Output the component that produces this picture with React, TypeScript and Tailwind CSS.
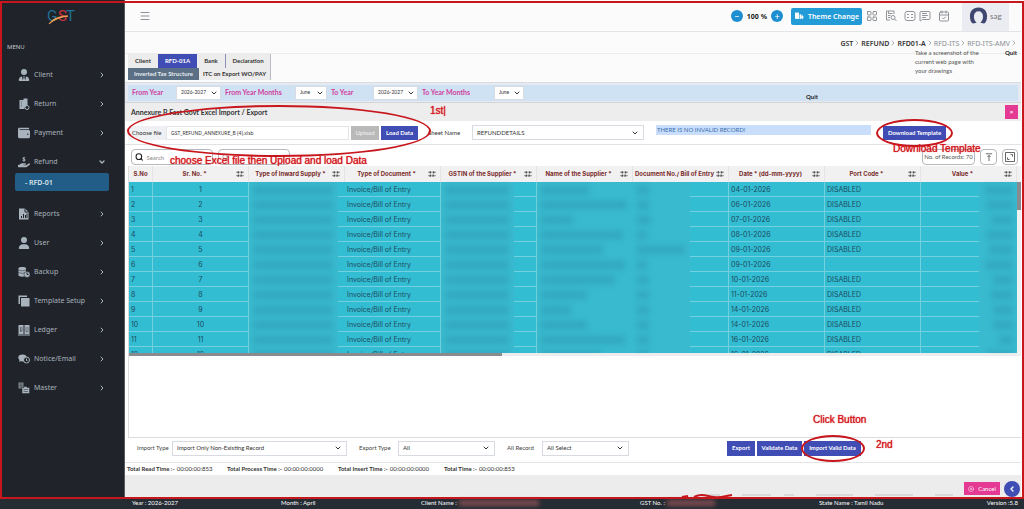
import type { ReactNode } from "react";
import clsx from "clsx";
import { CalendarCheck, ChevronDown, ChevronLeft, ChevronRight, CircleX, LayoutGrid, Menu, MessageSquareText, Search } from "lucide-react";
import { FaHandHoldingDollar, FaUser, FaUserTie, FaWallet } from "react-icons/fa6";

function ReturnIcon() {
  return (
    <svg viewBox="0 0 24 24" className="h-3 w-3" fill="currentColor">
      <path d="M3 4h8V1h8v14a6 6 0 0 0-6 7H3z" />
      <circle cx="18" cy="19" r="4" fill="none" stroke="currentColor" strokeWidth="2" />
      <path d="M6 8h2M6 12h2M6 16h2" stroke="#20242a" strokeWidth="1" />
    </svg>
  );
}

function ReportIcon() {
  return (
    <svg viewBox="0 0 24 24" className="h-3 w-3" fill="currentColor">
      <path d="M2 1h12l7 7v15H2z" />
      <path d="M14 1v7h7" stroke="#20242a" strokeWidth="2" fill="none" />
      <path d="M7 20v-4M11 20v-8M15 20v-6M18 20v-9" stroke="#20242a" strokeWidth="2" />
    </svg>
  );
}

function BackupIcon() {
  return (
    <svg viewBox="0 0 24 24" className="h-3 w-3" fill="currentColor">
      <path d="M1 4c0-3 15-3 15 0v15c0 3-15 3-15 0z" />
      <path d="M1 8c4 2 11 2 15 0M1 13c4 2 11 2 15 0" stroke="#20242a" fill="none" />
      <circle cx="18" cy="17" r="6" stroke="#20242a" />
      <path d="M18 13v4h3" stroke="#20242a" strokeWidth="2" fill="none" />
    </svg>
  );
}

function TemplateIcon() {
  return (
    <svg viewBox="0 0 24 24" className="h-3 w-3" fill="currentColor">
      <path d="M1 1h17v3H4v14H1z" />
      <path d="M6 6h17v17H6z" />
      <path d="M5 19V5h14" stroke="#20242a" fill="none" />
    </svg>
  );
}

function LedgerIcon() {
  return (
    <svg viewBox="0 0 24 24" className="h-3 w-3" fill="currentColor">
      <path d="M1 2h10v18H1zM13 2h10v18H13z" />
      <path d="M0 22h24" stroke="currentColor" strokeWidth="2" />
      <path d="M5 6v10M8 6v8h-3M16 6v8c0 3 4 3 4 0V6" stroke="#20242a" strokeWidth="1" fill="none" />
    </svg>
  );
}

function NoticeIcon() {
  return (
    <svg viewBox="0 0 24 24" className="h-3 w-3" fill="currentColor">
      <path d="M9 3c12 0 11 14 1 14-2 0-3 0-4-1l-4 2 1-4C-2 9 1 3 9 3z" />
      <circle cx="17" cy="14" r="6" fill="#20242a" stroke="currentColor" strokeWidth="2" />
      <path d="M17 11v4h2" stroke="currentColor" strokeWidth="2" fill="none" />
    </svg>
  );
}

function MasterIcon() {
  return (
    <svg viewBox="0 0 24 24" className="h-3 w-3" fill="currentColor">
      <path d="M1 1h10v12H1z" opacity=".7" />
      <path d="M3 4h6M3 7h6M3 10h6" stroke="#20242a" />
      <path d="M8 11h4V9h6v2h5v12H8z" stroke="#20242a" />
      <path d="M11 15h9M11 19h9" stroke="#20242a" strokeWidth="1" />
    </svg>
  );
}

const MENU_TOP = [
  { label: "Client", icon: <FaUserTie className="h-3 w-3" /> },
  { label: "Return", icon: <ReturnIcon /> },
  { label: "Payment", icon: <FaWallet className="h-3 w-3" /> },
];

const MENU_BOTTOM = [
  { label: "Reports", icon: <ReportIcon /> },
  { label: "User", icon: <FaUser className="h-3 w-3" /> },
  { label: "Backup", icon: <BackupIcon /> },
  { label: "Template Setup", icon: <TemplateIcon /> },
  { label: "Ledger", icon: <LedgerIcon /> },
  { label: "Notice/Email", icon: <NoticeIcon /> },
  { label: "Master", icon: <MasterIcon /> },
];

// name / doc / val are widths of the masked values in px
const ROWS = [
  { date: "04-01-2026", port: "DISABLED", name: 48, doc: 12, val: 28 },
  { date: "06-01-2026", port: "DISABLED", name: 86, doc: 12, val: 26 },
  { date: "07-01-2026", port: "DISABLED", name: 32, doc: 14, val: 22 },
  { date: "08-01-2026", port: "DISABLED", name: 82, doc: 10, val: 26 },
  { date: "09-01-2026", port: "DISABLED", name: 62, doc: 48, val: 24 },
  { date: "09-01-2026", port: "", name: 84, doc: 10, val: 28 },
  { date: "10-01-2026", port: "DISABLED", name: 74, doc: 12, val: 20 },
  { date: "11-01-2026", port: "DISABLED", name: 46, doc: 12, val: 22 },
  { date: "14-01-2026", port: "DISABLED", name: 30, doc: 12, val: 20 },
  { date: "14-01-2026", port: "DISABLED", name: 46, doc: 12, val: 20 },
  { date: "16-01-2026", port: "DISABLED", name: 84, doc: 12, val: 14 },
  { date: "16-01-2026", port: "DISABLED", name: 60, doc: 12, val: 26 },
];

const COLUMNS = [
  "Sr. No. *",
  "Type of Inward Supply *",
  "Type of Document *",
  "GSTIN of the Supplier *",
  "Name of the Supplier *",
  "Document No./ Bill of Entry",
  "Date * (dd-mm-yyyy)",
  "Port Code *",
  "Value *",
];

function MenuItem({ label, icon, open }: { label: string; icon: ReactNode; open?: boolean }) {
  return (
    <a href="#" className="flex h-[29px] items-center gap-1 pl-[18px] pr-[18px] text-[7px] text-[#a9b3bd]">
      {icon}
      <span className="flex-1">{label}</span>
      {open ? <ChevronDown className="h-2 w-2" strokeWidth={4} /> : <ChevronRight className="h-2 w-2" strokeWidth={3} />}
    </a>
  );
}

function Sidebar() {
  return (
    <aside className="w-[125px] shrink-0 border-r border-[#555a60] bg-[#20242a] pt-2 font-['Noto_Sans',sans-serif]">
      <svg viewBox="0 0 30 18" className="ml-[47px] h-[18px] w-[30px]">
        <text x="0" y="13" fontSize="15" fontFamily="Roboto, sans-serif" fill="#1f6f96">G</text>
        <text x="11" y="13" fontSize="15" fontFamily="Roboto, sans-serif" fill="#c8323c">S</text>
        <text x="19" y="13" fontSize="15" fontFamily="Roboto, sans-serif" fill="#1f6f96">T</text>
        <path d="M2 16C6 10 14 8 21 8C14 9 8 11 2 16z" fill="#f0a050" stroke="#f0a050" />
      </svg>
      <div className="mt-4 pl-[7px] text-[6px] leading-[10px] text-[#c3c9cf]">MENU</div>
      <nav className="mt-2">
        {MENU_TOP.map((item) => (
          <MenuItem key={item.label} {...item} />
        ))}
        <MenuItem label="Refund" icon={<FaHandHoldingDollar className="h-3 w-3" />} open />
        <a href="#" className="mx-[15px] mt-[-3px] mb-2 flex h-[18px] items-center rounded-xs bg-[#215d87] pl-2.5 text-[7px] font-semibold text-[#dbe6ee]">
          - RFD-01
        </a>
        {MENU_BOTTOM.map((item) => (
          <MenuItem key={item.label} {...item} />
        ))}
      </nav>
    </aside>
  );
}

function TopBar() {
  return (
    <header className="flex h-8 items-center border-b border-[#e4e4e8] pt-px pl-[14px] pr-3 text-[#8f9399]">
      <button aria-label="Menu">
        <Menu className="h-3 w-3" strokeWidth={2} />
      </button>
      <div className="ml-auto flex items-center gap-1">
        <button className="flex h-3 w-3 items-center justify-center rounded-full bg-[#1d8fd0] text-[9px] leading-none text-white">−</button>
        <span className="font-['Noto_Sans',sans-serif] text-[7px] font-bold text-[#222]">100 %</span>
        <button className="flex h-3 w-3 items-center justify-center rounded-full bg-[#1d8fd0] text-[9px] leading-none text-white">+</button>
      </div>
      <button className="ml-2 flex h-[17px] w-[71px] items-center justify-center gap-1 rounded-xs bg-[#239bd7] font-['Noto_Sans',sans-serif] text-[7px] font-semibold text-white">
        <svg viewBox="0 0 16 14" className="h-2 w-2.5" fill="currentColor">
          <path d="M1 1h7v11H1z" />
          <path d="M9 4h3v8H9z" />
          <path d="M10 9h5M13 6l2 3-2 3" stroke="currentColor" strokeWidth="2" fill="none" />
        </svg>
        Theme Change
      </button>
      <div className="ml-1 flex items-center gap-[7px]">
        <LayoutGrid className="h-3 w-3" strokeWidth={2} />
        <svg viewBox="0 0 24 24" className="h-3 w-3" fill="none" stroke="currentColor" strokeWidth="2">
          <path d="M18 8V2H3v18h7M7 2v5h8M6 11h5M6 15h4" />
          <circle cx="16" cy="15" r="4" />
          <path d="M19 18l4 4" />
        </svg>
        <div className="flex items-center gap-[3px]">
          <svg viewBox="0 0 24 24" className="h-3 w-3" fill="none" stroke="currentColor" strokeWidth="2">
            <rect x="2" y="3" width="20" height="18" rx="4" />
            <path d="M6 9h4M14 9h4M6 15h4M14 15h4" />
          </svg>
          <MessageSquareText className="h-3 w-3" strokeWidth={2} />
        </div>
        <CalendarCheck className="h-3 w-3" strokeWidth={2} />
      </div>
      <div className="ml-3 flex h-full w-[47px] items-center gap-0.5 bg-[#ebebf2] pl-[7px] text-[8px] text-[#777]">
        <svg viewBox="0 0 20 20" className="h-5 w-[19px]">
          <path d="M10 1c6 0 9 4 9 9 0 4-1 7-3 8l-4-1c4-3 4-12-2-12S4 14 8 17l-4 1c-2-1-3-4-3-8 0-5 3-9 9-9z" fill="#3f4770" />
        </svg>
        sag
      </div>
    </header>
  );
}

function Breadcrumb() {
  const items = ["GST", "REFUND", "RFD01-A", "RFD-ITS", "RFD-ITS-AMV"];
  return (
    <nav className="flex h-[22px] items-center justify-end border-b border-[#ececec] pt-px pr-[3px] font-['Noto_Sans',sans-serif] text-[7px]">
      {items.map((item, i) => (
        <a key={item} href="#" className={clsx("flex items-center", i < 3 ? "font-semibold text-[#333]" : "text-[#8a8f96]")}>
          {item}
          <ChevronRight className="h-2 w-2 text-[#888]" />
        </a>
      ))}
    </nav>
  );
}

function Tabs() {
  return (
    <div className="flex border-b border-[#d9dde2] pl-[3px] text-[6px] font-bold text-[#333]">
      <div className="mb-0.5">
        <div className="flex h-[14px]">
          <button className="w-[30px] bg-[#ececec]">Client</button>
          <button className="w-[39px] bg-[#3f4db4] text-white">RFD-01A</button>
          <button className="w-[29px] border-r border-[#8a90b8] bg-[#ececec]">Bank</button>
          <button className="w-[45px] border-r border-[#b9bcc8] bg-[#ececec]">Declaration</button>
        </div>
        <div className="flex h-[12px]">
          <button className="w-[71px] bg-[#5b6f85] text-[#e6ebf0]">Inverted Tax Structure</button>
          <button className="w-[72px] border-r border-[#b9bcc8] bg-[#ececec]">ITC on Export WO/PAY</button>
        </div>
      </div>
      <p className="relative ml-auto mr-9 mt-[-6px] w-[70px] text-[6px] font-normal leading-[9px] text-[#555]">
        Take a screenshot of the current web page with your drawings
        <span className="absolute left-[90px] top-0 font-bold text-[#222]">Quit</span>
      </p>
    </div>
  );
}

function Select({ label, value, className, compact }: { label: string; value: string; className?: string; compact?: boolean }) {
  return (
    <span className={clsx("relative block border border-[#d8dce2] bg-white font-normal text-[#333]", compact ? "text-[5px]" : "text-[6px]", className)}>
      <select aria-label={label} className="h-full w-full appearance-none pl-1">
        <option>{value}</option>
      </select>
      <ChevronDown className={clsx("pointer-events-none absolute top-1/2 h-2 w-2 -translate-y-1/2", compact ? "right-0.5" : "right-1")} strokeWidth={3} />
    </span>
  );
}

function PeriodBar() {
  return (
    <div className="flex h-5 items-center border-b border-[#d5d5d8] bg-[#e6eaf0] px-[3px]">
      <div className="flex h-4 flex-1 items-center bg-[#cfe2f3] text-[7px] font-bold text-[#cf3f9f]">
        <span className="w-12 pl-1">From Year</span>
        <Select compact label="From Year" value="2026-2027" className="h-[14px] w-[45px]" />
        <span className="w-[74px] pl-1">From Year Months</span>
        <Select compact label="From Year Months" value="June" className="h-[14px] w-8" />
        <span className="w-[46px] pl-1">To Year</span>
        <Select compact label="To Year" value="2026-2027" className="h-[14px] w-[45px]" />
        <span className="w-[76px] pl-1">To Year Months</span>
        <Select compact label="To Year Months" value="June" className="h-[14px] w-[30px]" />
        <button className="ml-auto mr-[200px] pt-2 text-[6px] font-bold text-[#222]">Quit</button>
      </div>
    </div>
  );
}

function FileRow() {
  return (
    <div className="relative flex h-6 items-center border-b border-[#e2e2e5] bg-white pl-[3px] text-[6px] text-[#333]">
      <label htmlFor="file" className="flex h-[14px] w-[38px] items-center bg-[#eef0f4] pl-1">Choose file</label>
      <input id="file" defaultValue="GST_REFUND_ANNEXURE_B (4).xlsb" className="h-[14px] w-[183px] border border-[#e2e5ea] bg-white pl-1 text-[5px] font-['Noto_Sans',sans-serif]" />
      <button className="ml-0.5 h-[14px] w-7 bg-[#b9b9b9] font-bold text-[#e8e8e8]">Upload</button>
      <button className="ml-0.5 h-[14px] w-[37px] bg-[#3f4db4] font-bold text-white">Load Data</button>
      <span className="ml-2.5 w-[44px]">Sheet Name</span>
      <Select label="Sheet Name" value="REFUNDDETAILS" className="h-[15px] w-[172px]" />
      <mark className="mb-1.5 ml-3 h-[10px] w-[215px] bg-[#c9defa] pl-px leading-[9px] text-[#3a6fb0]">THERE IS NO INVALID RECORD!</mark>
      <div className="relative ml-3">
        <button className="h-[14px] w-[63px] bg-[#3f4db4] font-bold text-white">Download Template</button>
        <span className="pointer-events-none absolute -inset-x-[7px] -inset-y-[7px] rounded-[50%] border-2 border-[#c8161d]" />
        <Note className="left-2.5 top-[17px]">Download Template</Note>
      </div>
      <span className="pointer-events-none absolute left-[2px] top-[-16px] z-10 h-[52px] w-[304px] rounded-[50%] border-2 border-[#c8161d]" />
      <Note className="left-[305px] top-[-16px]">1st|</Note>
      <Note className="left-[45px] top-[34px]">choose Excel file then Upload and load Data</Note>
    </div>
  );
}

function Note({ className, children }: { className: string; children: ReactNode }) {
  return (
    <span className={clsx("pointer-events-none absolute z-10 whitespace-nowrap font-['Liberation_Sans',sans-serif] text-[10px] leading-3 text-[#d3141b] text-shadow-[0_0_1px_#d3141b]", className)}>
      {children}
    </span>
  );
}

function Masked({ cover, width, align }: { cover: string; width: number; align?: "right" }) {
  return (
    <div className={clsx("flex h-[15px]", align && "flex-row-reverse")}>
      <span className={clsx("flex items-center bg-[#39bacf] px-1", cover, align && "justify-end")}>
        <span className="block h-2 bg-[#2a93ab] opacity-50 blur-[3px]" style={{ width }} />
      </span>
      <span className="flex-1 border-b border-[#74d0de]" />
    </div>
  );
}

function FilterIcon() {
  return (
    <svg viewBox="0 0 14 12" className="h-2 w-2 shrink-0" fill="none" stroke="#444" strokeWidth="1">
      <path d="M0 3h14M0 9h14" />
      <path d="M4 1v4M9 7v4M10 1v4M4 7v4" strokeWidth="2" />
    </svg>
  );
}

function DataGrid() {
  return (
    <div className="h-[187px] overflow-hidden font-[Inter,sans-serif]">
      <table className="w-full table-fixed border-separate border-spacing-0 text-[7px] leading-none text-[#1d4a5c]">
        <thead className="bg-[#f1f1f2] text-[6px] text-[#7a2c2c]">
          <tr className="h-4">
            <th className="w-6 border-r border-[#e4e4e4] p-0">S.No</th>
            {COLUMNS.map((col) => (
              <th key={col} className="border-r border-[#e4e4e4] p-0">
                <div className="flex items-center pr-1">
                  <span className="flex-1 whitespace-nowrap text-center">{col}</span>
                  <FilterIcon />
                </div>
              </th>
            ))}
          </tr>
        </thead>
        <tbody className="bg-[#33bdd3]">
          {ROWS.map((row, i) => (
            <tr key={i} className="h-[15px]">
              <td className="border-r border-b border-[#74d0de] p-0 pl-0.5">{i + 1}</td>
              <td className="border-r border-b border-[#74d0de] p-0 text-center">{i + 1}</td>
              <td className="p-0"><Masked cover="w-[93%]" width={80} /></td>
              <td className="border-r border-b border-[#74d0de] p-0 pl-0.5">Invoice/Bill of Entry</td>
              <td className="border-r border-[#74d0de] p-0"><Masked cover="w-[77%]" width={64} /></td>
              <td className="p-0"><Masked cover="w-full" width={row.name} /></td>
              <td className="border-r border-[#74d0de] p-0"><Masked cover="w-[60%]" width={row.doc} /></td>
              <td className="border-r border-b border-[#74d0de] p-0 pl-0.5">{row.date}</td>
              <td className="border-r border-b border-[#74d0de] p-0 pl-0.5">{row.port}</td>
              <td className="p-0"><Masked cover="w-[40%]" width={row.val} align="right" /></td>
            </tr>
          ))}
        </tbody>
      </table>
    </div>
  );
}

function GridToolbar() {
  return (
    <div className="mt-[3px] flex h-[18px] items-center gap-[5px] pl-1.5 pr-[3px]">
      <label className="flex h-4 w-[82px] items-center gap-[3px] rounded-sm border border-[#b5b8bd] px-[3px]">
        <Search className="h-2.5 w-2.5 text-[#222]" strokeWidth={3} />
        <input placeholder="Search" aria-label="Search" className="w-full min-w-0 text-[6px] placeholder:text-[#888]" />
      </label>
      <label className="flex h-4 w-[72px] items-center gap-[3px] rounded-sm border border-[#b5b8bd] px-[3px]">
        <Search className="h-2 w-2 text-[#777]" />
        <input aria-label="Search column" className="w-full min-w-0 text-[6px]" />
      </label>
      <span className="ml-auto flex h-4 w-[53px] items-center justify-center rounded-sm border border-[#b5b8bd] text-[6px] text-[#555]">No. of Records: 70</span>
      <button aria-label="Filter" className="flex h-4 w-[17px] items-center justify-center rounded-sm border border-[#b5b8bd] text-[#444]">
        <svg viewBox="0 0 10 10" className="h-2 w-2" fill="none" stroke="currentColor">
          <path d="M1 1h8M5 10V3M3 5l2-2 2 2" />
        </svg>
      </button>
      <button aria-label="Expand" className="flex h-4 w-4 items-center justify-center rounded-sm border border-[#b5b8bd] text-[#666]">
        <svg viewBox="0 0 20 20" className="h-2.5 w-2.5" fill="none" stroke="currentColor" strokeWidth="2">
          <path d="M1 1h18v18H1zM11 5h4v4M5 11v4h4" />
        </svg>
      </button>
    </div>
  );
}

function ImportBar() {
  return (
    <div className="flex h-[25px] items-center border-b border-[#e4e4e4] pb-1 pl-3 pr-[160px] text-[6px] text-[#444]">
      <span className="w-[35px]">Import Type</span>
      <Select label="Import Type" value="Import Only Non-Existing Record" className="h-[15px] w-[175px]" />
      <span className="ml-3 w-[39px]">Export Type</span>
      <Select label="Export Type" value="All" className="h-[15px] w-[97px]" />
      <span className="ml-3 w-[35px]">All Record</span>
      <Select label="All Record" value="All Select" className="h-[15px] w-[87px]" />
      <div className="ml-auto flex gap-0.5 font-bold text-white">
        <button className="h-[15px] w-7 bg-[#3f4db4]">Export</button>
        <button className="h-[15px] w-[45px] bg-[#3f4db4]">Validate Data</button>
        <div className="relative">
          <button className="h-[15px] w-[57px] bg-[#3f4db4]">Import Valid Data</button>
          <span className="pointer-events-none absolute -left-[3px] -right-1 -inset-y-[6px] rounded-[50%] border-2 border-[#c8161d]" />
          <div className="font-normal">
            <Note className="left-[9px] top-[-27px]">Click Button</Note>
            <Note className="left-[72px] top-[-2px]">2nd</Note>
          </div>
        </div>
      </div>
    </div>
  );
}

function Timings() {
  const items = [
    ["Total Read Time :-", "00:00:00:853", "w-[100px]"],
    ["Total Process Time :-", "00:00:00:0000", "w-[111px]"],
    ["Total Insert Time :-", "00:00:00:0000", "w-[106px]"],
    ["Total Time :-", "00:00:00:853", "w-[100px]"],
  ];
  return (
    <dl className="flex h-3 items-center pl-0.5 text-[6px] text-[#333]">
      {items.map(([name, value, width]) => (
        <div key={name} className={clsx("flex gap-0.5 whitespace-nowrap", width)}>
          <dt className="font-bold">{name}</dt>
          <dd>{value}</dd>
        </div>
      ))}
    </dl>
  );
}

function ActionStrip() {
  return (
    <div className="flex h-[22px] items-end justify-end gap-1 bg-[#ececec] pr-px">
      <svg viewBox="0 0 330 8" className="mr-[-12px] h-2 w-[330px]" fill="none">
        <path d="M58 6h20M100 6h29M142 6h10M174 6h37M233 6h38M293 6h18" stroke="#c4c4c8" />
        <path d="M40 8l6-1M52 8c8-4 12-1 20 0s10-1 18-2" stroke="#c8161d" strokeWidth="2" />
      </svg>
      <button className="z-10 mb-0.5 flex h-[13px] w-9 items-center justify-center gap-1 bg-[#e53a94] text-[6px] text-white">
        <CircleX className="h-1.5 w-1.5" />
        Cancel
      </button>
      <button aria-label="Collapse" className="z-10 flex h-4 w-4 items-center justify-center rounded-full bg-[#3f4db4] text-white">
        <ChevronLeft className="h-2 w-2" strokeWidth={4} />
      </button>
    </div>
  );
}

function Footer() {
  return (
    <footer className="flex h-3 items-center bg-[#262c33] pl-[132px] pr-1.5 text-[6px] text-white">
      <span className="w-[149px]">Year : 2026-2027</span>
      <span className="w-[140px]">Month : April</span>
      <span className="flex w-[219px] items-center gap-0.5">
        Client Name :<span className="h-1.5 w-20 bg-[#7a4a50] blur-[2px]" />
      </span>
      <span className="flex w-[179px] items-center gap-0.5">
        GST No. :<span className="h-1.5 w-12 bg-[#7a4a50] blur-[2px]" />
      </span>
      <span>State Name : Tamil Nadu</span>
      <span className="ml-auto">Version :5.8</span>
    </footer>
  );
}

export default function App() {
  return (
    <div className="relative flex min-h-screen flex-col bg-white font-[Lato,sans-serif] leading-none">
      <div className="flex flex-1">
        <Sidebar />
        <main className="flex min-w-0 flex-1 flex-col pr-[3px]">
          <div className="bg-[#fbfbfb]">
            <TopBar />
            <Breadcrumb />
            <Tabs />
          </div>
          <PeriodBar />
          <div className="flex h-[18px] items-center bg-[#ededed] pl-1.5 text-[7px] font-bold text-[#333]">
            <h1>Annexure B Fast Govt Excel Import / Export</h1>
            <button aria-label="Close" className="ml-auto mr-[3px] h-[14px] w-[13px] bg-[#e53a94] text-[6px] text-white">×</button>
          </div>
          <FileRow />
          <GridToolbar />
          <section className="ml-[3px] flex flex-1 flex-col border-b border-l border-[#dcdcdc]">
            <div className="flex">
              <div className="min-w-0 flex-1">
                <DataGrid />
                <div className="h-[3px] bg-[#ececec]">
                  <div className="h-full w-[42%] bg-[#8b8b8f]" />
                </div>
              </div>
              <div className="w-1 bg-[#f1f1f1] pt-4">
                <div className="h-7 bg-[#8b8b8f]" />
              </div>
            </div>
          </section>
          <ImportBar />
          <Timings />
          <ActionStrip />
        </main>
      </div>
      <Footer />
      <div className="pointer-events-none absolute inset-x-0 bottom-[10px] top-px z-20 border-2 border-[#c8161d]" />
    </div>
  );
}
